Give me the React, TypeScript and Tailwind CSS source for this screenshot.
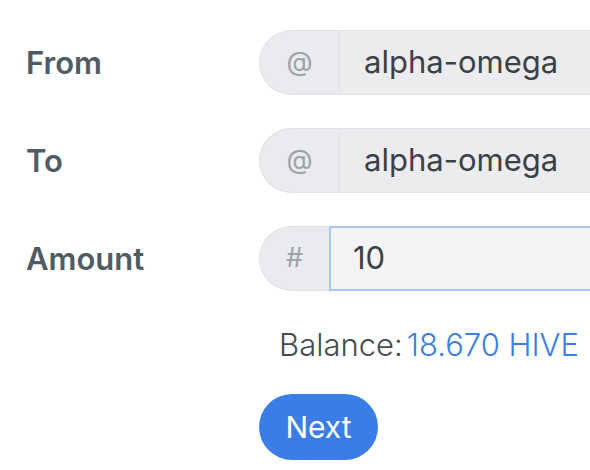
import React from "react";

function Row({ label, symbol, value, focused, prependW }: { label: string; symbol: string; value: string; focused?: boolean; prependW: string }) {
  return (
    <div className="flex items-center h-[65px]">
      <div className="w-[259px] shrink-0 pl-[26px] pt-[2px] text-[31px] font-semibold text-[#505b62]">{label}</div>
      <div className="flex h-[65px] w-[400px] shrink-0">
        <div className={`${prependW} shrink-0 flex items-center justify-center rounded-l-full bg-[#e9ebee] border border-[#e0e2e5] border-r-0 text-[27px] text-[#9ea3a7]`}>
          {symbol}
        </div>
        {focused ? (
          <div className="flex-1 flex items-center bg-[#f4f4f4] border-2 border-[#a6c8f4] pl-[22px] text-[31px] text-[#3a4247]">
            {value}
          </div>
        ) : (
          <div className="flex-1 flex items-center bg-[#ececee] border border-[#e0e2e5] pl-[24px] text-[31px] text-[#3a4247]">
            {value}
          </div>
        )}
      </div>
    </div>
  );
}

export default function App() {
  return (
    <div className="w-[590px] h-[470px] overflow-hidden bg-white pt-[30px]" style={{ fontFamily: "Inter, 'Noto Sans', sans-serif" }}>
      <div className="flex flex-col gap-[33px]">
        <Row label="From" symbol="@" value="alpha-omega" prependW="w-[80px]" />
        <Row label="To" symbol="@" value="alpha-omega" prependW="w-[80px]" />
        <Row label="Amount" symbol="#" value="10" focused prependW="w-[70px]" />
      </div>
      <div className="pl-[279px] mt-[35px] text-[31px] leading-[38px] flex gap-[4px]">
        <span className="text-[#444b50] font-light">Balance:</span>
        <span className="text-[#3b7fe0] font-light">18.670 HIVE</span>
      </div>
      <div className="pl-[259px] mt-[30px]">
        <button className="h-[66px] w-[119px] rounded-full bg-[#3a7de6] text-white text-[30px] font-normal">Next</button>
      </div>
    </div>
  );
}
